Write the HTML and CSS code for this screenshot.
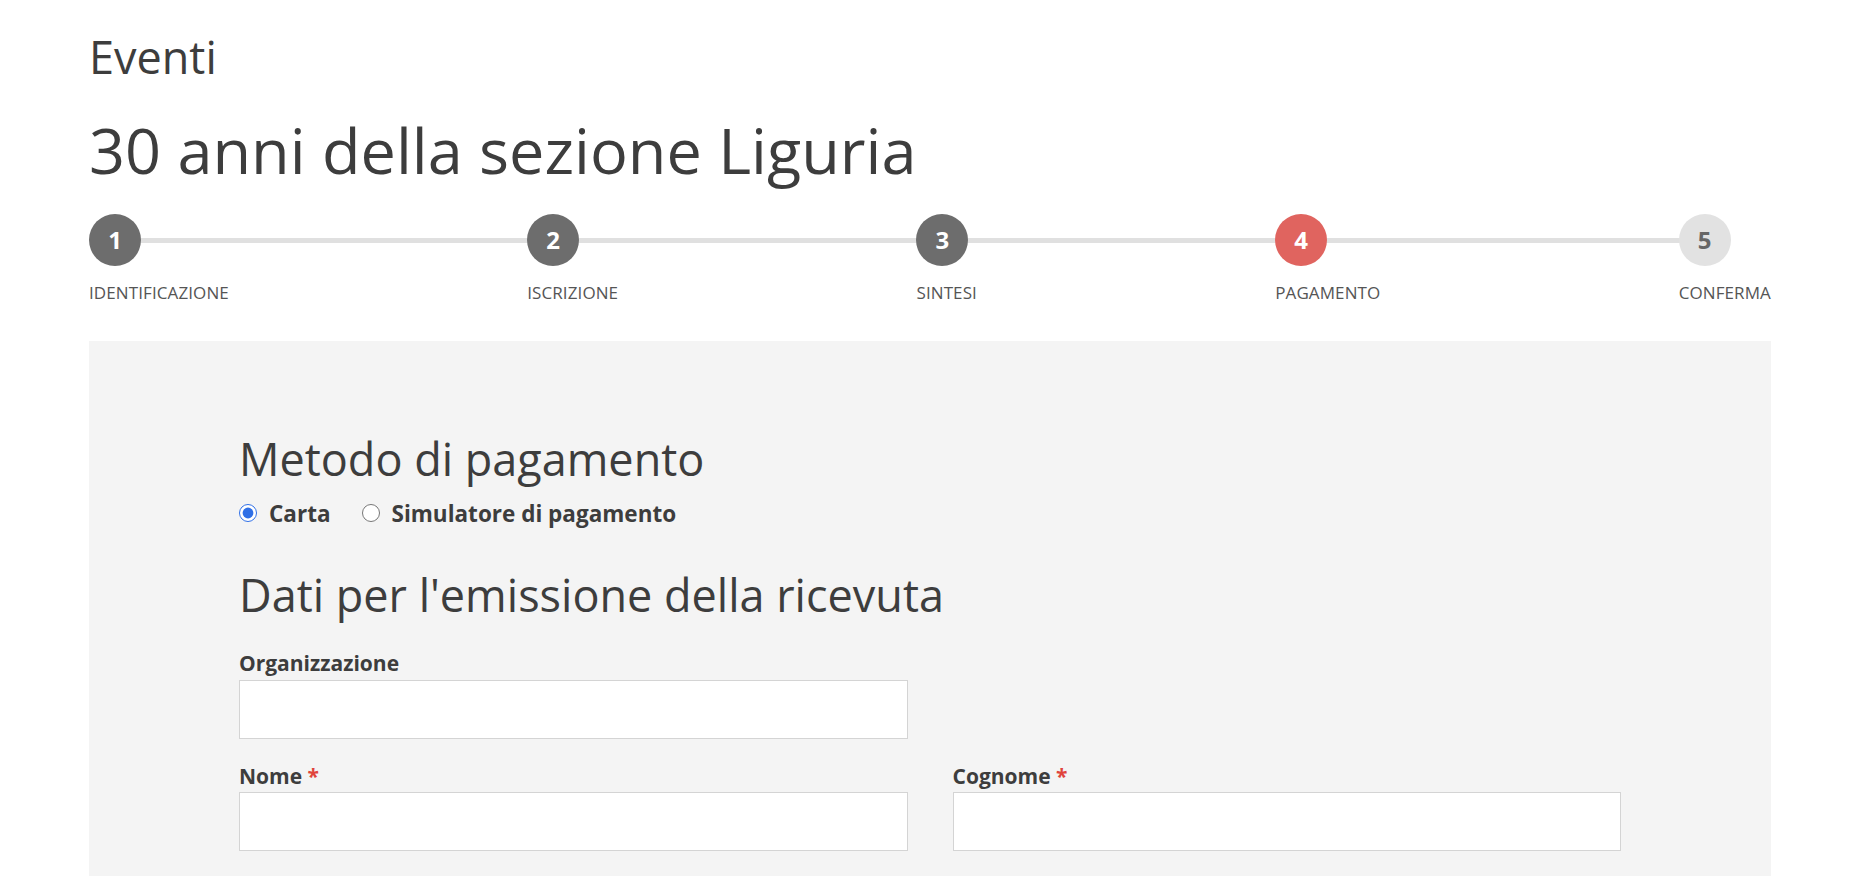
FILE: index.html
```html
<!DOCTYPE html>
<html lang="it">
<head>
	<meta charset="utf-8" />
	<meta name="viewport" content="width=device-width, initial-scale=1.0" />
	<title>30 anni della sezione Liguria - Pagamento</title>
	<link rel="stylesheet" href="styles.css">
</head>

<body>
	<div class="page">
		<div class="section-name">Eventi</div>
		<h1 class="event-title">30 anni della sezione Liguria</h1>

		<ol class="stepper">
			<li class="step done"><span class="step-num">1</span><span class="step-label">Identificazione</span></li>
			<li class="step done"><span class="step-num">2</span><span class="step-label">Iscrizione</span></li>
			<li class="step done"><span class="step-num">3</span><span class="step-label">Sintesi</span></li>
			<li class="step active"><span class="step-num">4</span><span class="step-label">Pagamento</span></li>
			<li class="step"><span class="step-num">5</span><span class="step-label">Conferma</span></li>
		</ol>

		<div class="panel">
			<form class="payment-form">
				<h2>Metodo di pagamento</h2>
				<div class="radio-row">
					<label class="radio"><input type="radio" name="metodo" value="carta" checked> Carta</label>
					<label class="radio"><input type="radio" name="metodo" value="simulatore"> Simulatore di pagamento</label>
				</div>

				<h2 class="receipt-title">Dati per l'emissione della ricevuta</h2>

				<div class="field-row first-row">
					<div class="field">
						<label for="organizzazione">Organizzazione</label>
						<input type="text" id="organizzazione">
					</div>
					<div class="field"></div>
				</div>

				<div class="field-row">
					<div class="field">
						<label for="nome">Nome <span class="required">*</span></label>
						<input type="text" id="nome">
					</div>
					<div class="field">
						<label for="cognome">Cognome <span class="required">*</span></label>
						<input type="text" id="cognome">
					</div>
				</div>
			</form>
		</div>
	</div>
</body>
</html>
```

FILE: styles.css
```css
body {
	margin: 0;
	background: #fff;
	font-family: 'Open Sans', 'Noto Sans', sans-serif;
	color: #3d3d3d;
}
.page {
	width: 1682px;
	padding: 30px 0 0 89px;
}
.section-name {
	font-size: 45px;
	line-height: 1.2;
}
.event-title {
	margin: 28px 0 0;
	font-size: 63px;
	font-weight: 400;
	line-height: 1.2;
}

/* stepper */
.stepper {
	position: relative;
	display: flex;
	justify-content: space-between;
	list-style: none;
	margin: 26px 0 0;
	padding: 0;
}
.stepper::before {
	content: "";
	position: absolute;
	top: 24px;
	left: 26px;
	right: 66px;
	height: 5px;
	background: #e0e0e0;
}
.step {
	position: relative;
	display: flex;
	flex-direction: column;
	align-items: flex-start;
}
.step-num {
	display: flex;
	align-items: center;
	justify-content: center;
	width: 52px;
	height: 52px;
	border-radius: 50%;
	background: #e2e2e2;
	color: #666;
	font-size: 24px;
	font-weight: 700;
}
.step.done .step-num {
	background: #6d6d6d;
	color: #fff;
}
.step.active .step-num {
	background: #e0645f;
	color: #fff;
}
.step-label {
	margin-top: 15px;
	font-size: 17px;
	letter-spacing: 0.1px;
	line-height: 1.4;
	text-transform: uppercase;
	color: #555;
}

/* panel */
.panel {
	margin-top: 37px;
	background: #f4f4f4;
	padding: 91px 150px 60px;
}
.payment-form h2 {
	margin: 0;
	font-size: 45px;
	font-weight: 400;
	line-height: 1.2;
}
.radio-row {
	display: flex;
	gap: 31px;
	margin-top: 13px;
	height: 28px;
	align-items: center;
}
.radio {
	display: flex;
	align-items: center;
	gap: 12px;
	font-size: 22.5px;
	font-weight: 700;
}
.radio input {
	width: 18px;
	height: 18px;
	margin: 0;
	accent-color: #2f6fe6;
}
.payment-form .receipt-title {
	margin-top: 41px;
}
.field-row {
	display: flex;
	gap: 45px;
}
.first-row {
	margin-top: 27px;
}
.field {
	flex: 1;
	margin-bottom: 23px;
}
.field label {
	display: block;
	margin-bottom: 1px;
	font-size: 21px;
	font-weight: 700;
	line-height: 1.4;
}
.field input {
	display: block;
	box-sizing: border-box;
	width: 100%;
	height: 59px;
	margin: 0;
	border: 1px solid #d4d4d4;
	background: #fff;
	font-family: inherit;
	font-size: 18px;
	padding: 0 12px;
}
.required {
	color: #e0443c;
}
```
